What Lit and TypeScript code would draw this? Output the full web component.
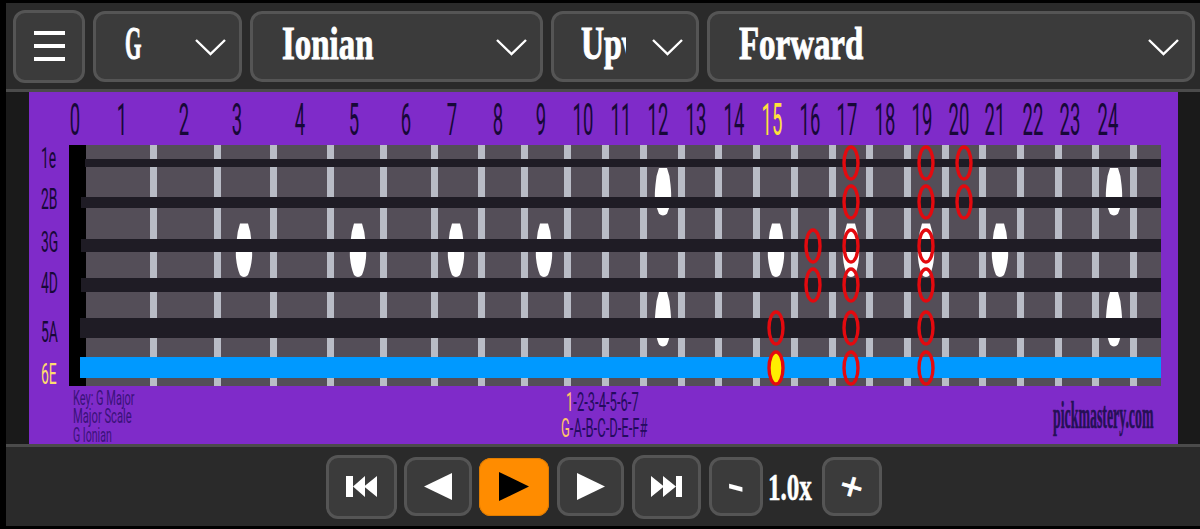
import { LitElement, html, css, svg } from "lit";
import { customElement } from "lit/decorators.js";

const FRETS = [150,214,270,327,380,431,478,521,564,602,640,678,715,753,791,829,866,904,942,979,1017,1055,1092,1130];
const NUMS = [75,122,184,237,300,354,406,452,498,541,583,621,658,696,734,772,810,847,885,922,959,995,1033,1070,1108];
const STRINGS: [number, number, number][] = [[85,159,8],[81,197,11],[81,239,13],[81,278,14],[80,318,20]];
const LABELS: [string, number][] = [["1e",168],["2B",209],["3G",252],["4D",293],["5A",342],["6E",384]];
const INLAYS: [number, number, number][] = [
  [244,250,1],[358,250,1],[456,250,1],[544,250,1],[776,250,1],[851,250,1],[926,250,1],[1000,250,1],
  [663,191.5,0.89],[663,319,1.02],[1114,191.5,0.89],[1114,319,1.02],
];
const NOTES: [number, number][] = [
  [851,163],[851,202],[851,246],[851,285],[851,328],[851,368],
  [926,163],[926,202],[926,246],[926,285],[926,328],[926,368],
  [964,163],[964,202],[813,246],[813,285],[776,328],
];

const chevron = html`<svg class="chev" viewBox="0 0 31 17"><path d="M1 1 L15.5 15 L30 1"></path></svg>`;

@customElement("app-root")
export class AppRoot extends LitElement {
  static styles = css`
    :host { display: block; width: 1200px; height: 529px; background: #000; overflow: hidden; }
    .page { display: flex; flex-direction: column; height: 529px; padding: 3px 0 3px 6px; box-sizing: border-box; }
    .top { height: 86px; flex: none; background: #2a2a2a; display: flex; align-items: center; gap: 8px; padding: 0 5px 0 7px; box-sizing: border-box; }
    .box { box-sizing: border-box; background: #3b3b3b; border: 3px solid #555; border-radius: 12px; display: flex; align-items: center; flex: none; }
    .menu { width: 72px; height: 73px; flex-direction: column; justify-content: center; gap: 9.5px; }
    .menu i { display: block; width: 31px; height: 3.5px; background: #fff; }
    .sel { height: 71px; position: relative; overflow: hidden; }
    .key { width: 149px; }
    .mode { width: 293px; }
    .dir { width: 148px; }
    .order { width: 488px; }
    .chev { position: absolute; top: 25px; right: 13px; width: 31px; height: 17px; }
    .chev path { fill: none; stroke: #fff; stroke-width: 2.4; }
    .clip { position: absolute; top: -3px; height: 65px; overflow: hidden; }
    .txt { display: block; font: 700 47px/65px "Liberation Serif", serif; color: #fff; -webkit-text-stroke: 1px #fff; transform-origin: 0 50%; white-space: nowrap; }
    .key .clip { left: 29px; width: 30px; }
    .key .txt { transform: scaleX(.45); }
    .mode .clip { left: 29px; width: 110px; }
    .mode .txt { transform: scaleX(.7); }
    .dir .clip { left: 27px; width: 45px; }
    .dir .txt { transform: scaleX(.68); }
    .order .clip { left: 29px; width: 140px; }
    .order .txt { transform: scaleX(.7); }
    .rule { height: 3px; flex: none; background: #4b4b4b; }
    .mid { height: 352px; flex: none; background: #1a1a1a; padding-left: 23px; }
    .mid svg { display: block; width: 1149px; height: 352px; }
    .bottom { flex: 1; background: #2a2a2a; display: flex; align-items: center; padding: 0 0 0 320px; box-sizing: border-box; }
    .btn { position: relative; height: 59px; margin-right: 8px; display: flex; align-items: center; justify-content: center; }
    .btn svg { display: block; }
    .big { width: 71px; height: 64px; margin-right: 7px; }
    .b-prev { width: 68px; margin-right: 7px; }
    .b-skip { width: 69px; height: 64px; }
    .b-next { width: 67px; margin-right: 8px; }
    .b-step { width: 54px; margin-right: 5px; }
    .b-plus { width: 60px; margin-left: 5px; }
    .play { width: 70px; height: 58px; background: #ff8c00; border: none; box-shadow: inset 0 0 0 1px #e07c00; }
    .sign { font: 700 34px/1 "Liberation Serif", serif; color: #fff; display: block; }
    .minus { transform: translateY(-4px) scale(1.5, 1.6) skewY(14deg); }
    .plus { transform: rotate(16deg) scale(1.2); -webkit-text-stroke: .7px #fff; }
    .speed { font: 700 38px/1 "Liberation Serif", serif; color: #fff; -webkit-text-stroke: .6px #fff; width: 49px; white-space: nowrap; transform-origin: 0 50%; transform: scaleX(.66); }
    .num { font: 400 44px "Roboto", sans-serif; fill: #170838; }
    .num.on { fill: #ffe23c; }
    .lab { font: 400 29px "Roboto", sans-serif; fill: #170838; }
    .lab.on { fill: #ffdc6e; }
    .info { font: 400 20px "Roboto", sans-serif; fill: #3a1279; }
    .seq { font: 400 26px "Roboto", sans-serif; fill: #250b60; }
    .seq .hi { fill: #ffc56a; }
    .brand { font: 700 38px "Liberation Serif", serif; fill: #261056; stroke: #261056; stroke-width: .6; }
  `;

  private board() {
    return svg`
      <svg viewBox="29 92 1149 352">
        <rect x="29" y="92" width="1149" height="352" fill="#7f2bc9"></rect>
        <rect x="69" y="145" width="1092" height="241" fill="#544e58"></rect>
        <rect x="69" y="145" width="17" height="241" fill="#000"></rect>
        ${FRETS.map(x => svg`<rect x=${x} y="145" width="7" height="241" fill="#b9bcc6"></rect>`)}
        ${INLAYS.map(([x, y, s]) => svg`<path transform="translate(${x} ${y}) scale(1 ${s})" fill="#fff"
          d="M-4 -26.5 L4 -26.5 Q7 -18 7.5 -8 Q8.5 3 8 8 Q7 18 4 25 Q2 27 0 27 Q-2 27 -4 25 Q-7 18 -8 8 Q-8.5 3 -7.5 -8 Q-7 -18 -4 -26.5Z"></path>`)}
        ${STRINGS.map(([x, y, h]) => svg`<rect x=${x} y=${y} width=${1161 - x} height=${h} fill="#1f1c25"></rect>`)}
        <rect x="80" y="357" width="1081" height="21" fill="#0099ff"></rect>
        ${NUMS.map((x, i) => svg`<text class="num ${i === 15 ? "on" : ""}" text-anchor="middle" transform="translate(${x} 135) scale(.42 1)">${i}</text>`)}
        ${LABELS.map(([t, y], i) => svg`<text class="lab ${i === 5 ? "on" : ""}" transform="translate(41 ${y}) scale(.48 1)">${t}</text>`)}
        ${NOTES.map(([x, y]) => svg`<ellipse cx=${x} cy=${y} rx="7" ry="16" fill="none" stroke="#e30a0f" stroke-width="3.4"></ellipse>`)}
        <ellipse cx="776" cy="368" rx="7" ry="16" fill="#ffee00" stroke="#e30a0f" stroke-width="3.4"></ellipse>
        <text class="info" transform="translate(73 405) scale(.55 1)">Key: G Major</text>
        <text class="info" transform="translate(73 423) scale(.56 1)">Major Scale</text>
        <text class="info" transform="translate(73 442) scale(.53 1)">G Ionian</text>
        <text class="seq" transform="translate(566 411) scale(.5 1)"><tspan class="hi">1</tspan>-2-3-4-5-6-7</text>
        <text class="seq" transform="translate(561 437) scale(.5 1)"><tspan class="hi">G</tspan>-A-B-C-D-E-F#</text>
        <text class="brand" transform="translate(1053 428) scale(.365 1)">pickmastery.com</text>
      </svg>`;
  }

  render() {
    return html`
      <div class="page">
        <div class="top">
          <div class="box menu"><i></i><i></i><i></i></div>
          <div class="box sel key"><div class="clip"><span class="txt">G</span></div>${chevron}</div>
          <div class="box sel mode"><div class="clip"><span class="txt">Ionian</span></div>${chevron}</div>
          <div class="box sel dir"><div class="clip"><span class="txt">Upward</span></div>${chevron}</div>
          <div class="box sel order"><div class="clip"><span class="txt">Forward</span></div>${chevron}</div>
        </div>
        <div class="rule"></div>
        <div class="mid">${this.board()}</div>
        <div class="rule"></div>
        <div class="bottom">
          <div class="box btn big"><svg width="31" height="21" viewBox="0 0 31 21"><path fill="#fff" d="M0 0H7V21H0Z M7 10.5L19 0V21Z M18 10.5L31 0V21Z"></path></svg></div>
          <div class="box btn b-prev"><svg width="28" height="27" viewBox="0 0 28 27"><path fill="#fff" d="M0 13.5L28 0V27Z"></path></svg></div>
          <div class="box btn play"><svg width="30" height="29" viewBox="0 0 30 29"><path fill="#000" d="M0 0L30 14.5L0 29Z"></path></svg></div>
          <div class="box btn b-next"><svg width="28" height="27" viewBox="0 0 28 27"><path fill="#fff" d="M0 0L28 13.5L0 27Z"></path></svg></div>
          <div class="box btn b-skip"><svg width="31" height="21" viewBox="0 0 31 21"><path fill="#fff" d="M0 0L13 10.5L0 21Z M12 0L25 10.5L12 21Z M25 0H31V21H25Z"></path></svg></div>
          <div class="box btn b-step"><span class="sign minus">-</span></div>
          <div class="speed">1.0x</div>
          <div class="box btn b-plus"><span class="sign plus">+</span></div>
        </div>
      </div>`;
  }
}
